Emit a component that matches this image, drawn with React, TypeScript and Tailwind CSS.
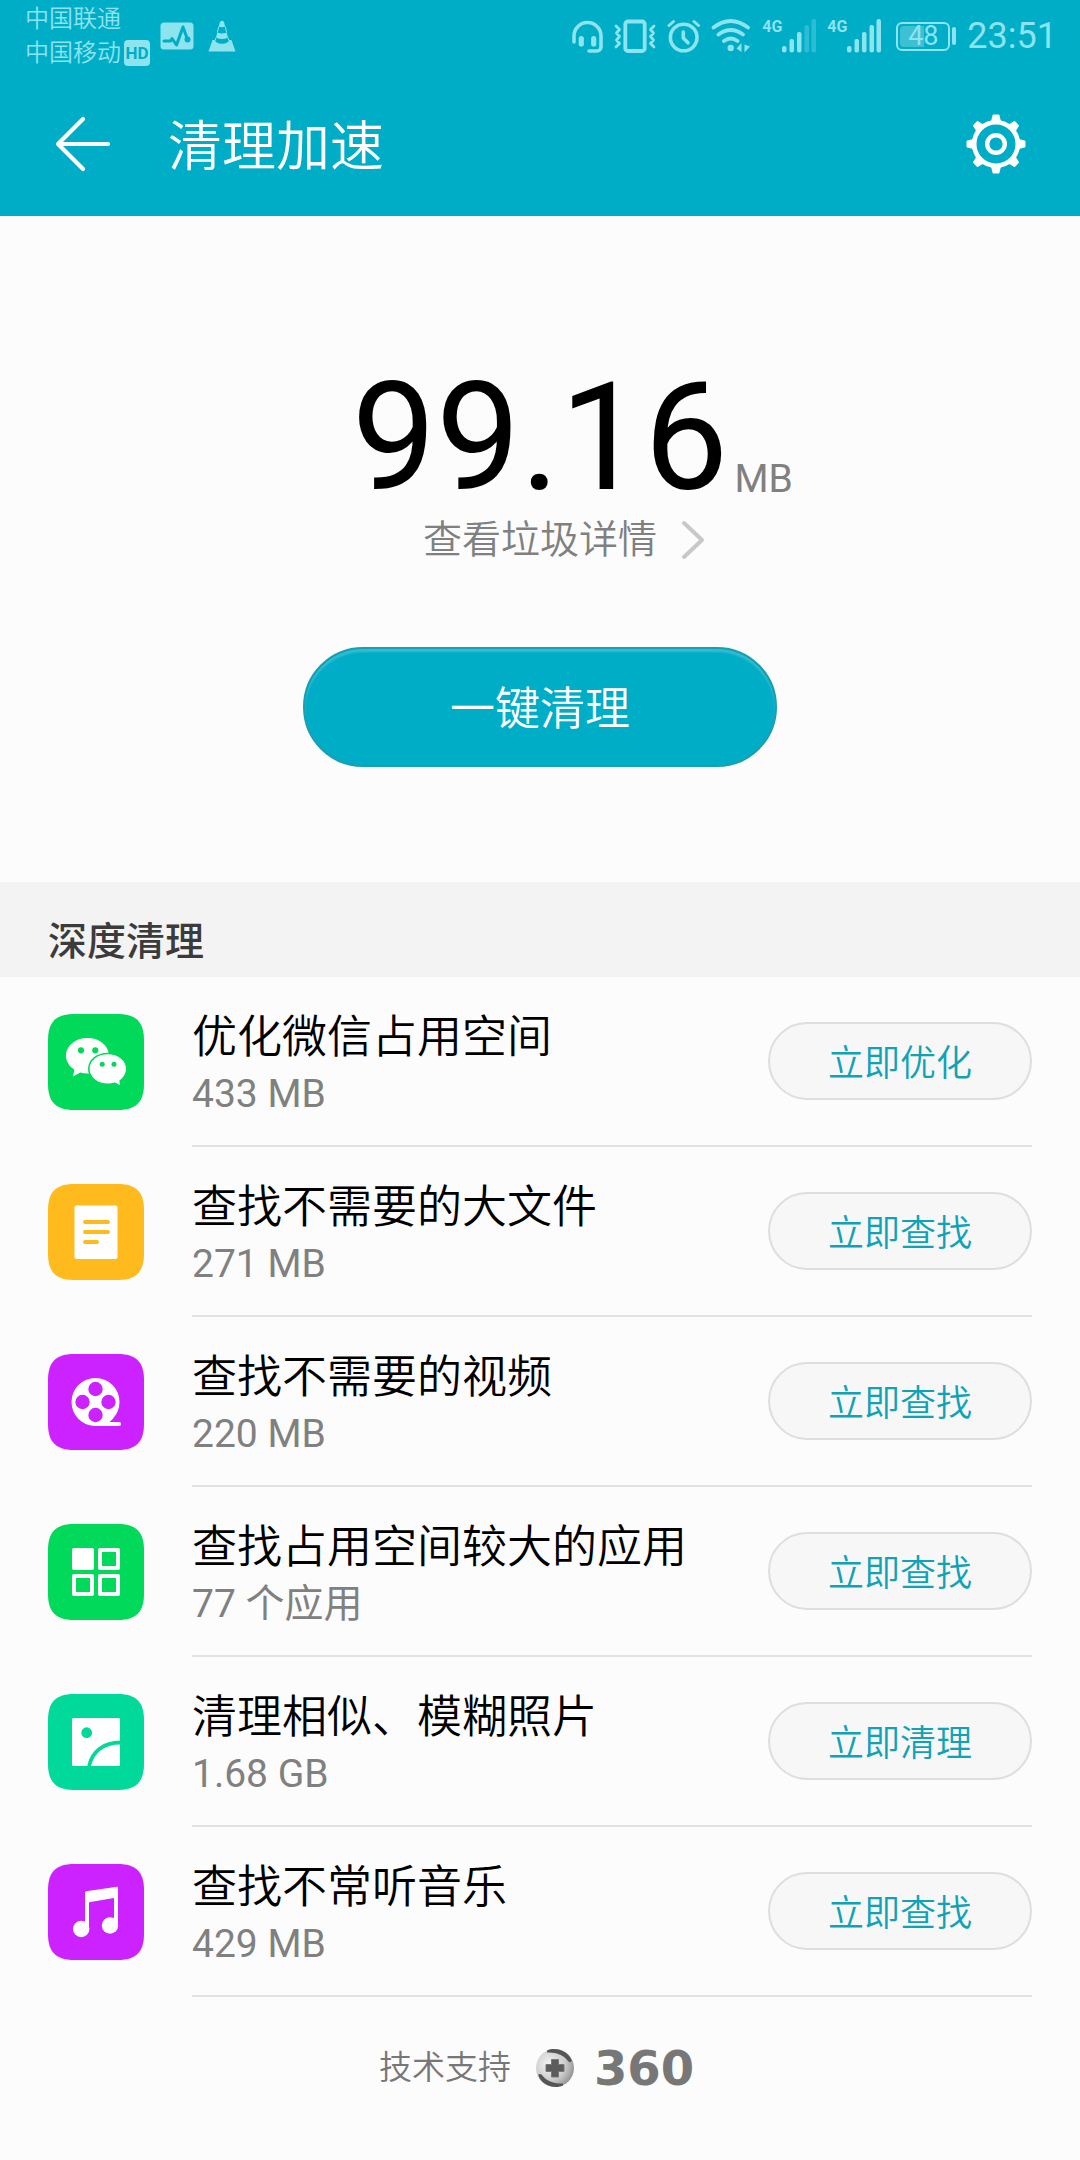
import type { ReactNode } from "react";

type CleanItem = {
  title: string;
  detail: string;
  action: string;
  color: string;
  icon: ReactNode;
};

const items: CleanItem[] = [
  {
    title: "优化微信占用空间",
    detail: "433 MB",
    action: "立即优化",
    color: "text-[#00d95a]",
    icon: (
      <>
        <path
          fill="white"
          d="M39.500 24c12 0 21.500 7.800 21.500 17.800S51.500 59.600 39.500 59.600c-2.600 0-5-.3-7.200-1L25 62.500l1.400-6.800C21.500 52.500 18 47.600 18 41.800 18 31.800 27.500 24 39.500 24z"
        />
        <path
          fill="white"
          stroke="currentColor"
          strokeWidth="1.600"
          d="M59.800 39.500c10.500 0 19 6.600 19 15.300 0 5-2.700 9.200-6.600 12l.8 5.700-6-3.200c-2.200.7-4.600 1.100-7.200 1.100-10.500 0-19-6.900-19-15.600s8.500-15.300 19-15.300z"
        />
        <circle cx="33" cy="36.300" r="3.100" />
        <circle cx="47.300" cy="36.300" r="3.100" />
        <circle cx="54.200" cy="50.300" r="2.500" />
        <circle cx="66" cy="50.300" r="2.500" />
      </>
    ),
  },
  {
    title: "查找不需要的大文件",
    detail: "271 MB",
    action: "立即查找",
    color: "text-[#ffbb1e]",
    icon: (
      <>
        <rect x="26.500" y="21.500" width="43" height="53.500" rx="2" fill="white" />
        <path
          d="M37 38h23M37 48h23M37 58h12"
          stroke="currentColor"
          strokeWidth="4"
          strokeLinecap="round"
        />
      </>
    ),
  },
  {
    title: "查找不需要的视频",
    detail: "220 MB",
    action: "立即查找",
    color: "text-[#cc22ff]",
    icon: (
      <>
        <circle cx="47.500" cy="48" r="24" fill="white" />
        <path
          fill="white"
          d="M47.500 72h23.500a2 2 0 0 0 0-4h-9.500l4-4-10-4z"
        />
        <circle cx="47.500" cy="35" r="7.200" />
        <circle cx="47.500" cy="61" r="7.200" />
        <circle cx="34.500" cy="48" r="7.200" />
        <circle cx="60.500" cy="48" r="7.200" />
      </>
    ),
  },
  {
    title: "查找占用空间较大的应用",
    detail: "77 个应用",
    action: "立即查找",
    color: "text-[#00d95a]",
    icon: (
      <g stroke="white" strokeWidth="4" strokeLinejoin="round" fill="none">
        <rect x="26" y="26" width="18" height="18" fill="white" />
        <rect x="52" y="26" width="18" height="18" />
        <rect x="26" y="52" width="18" height="18" />
        <rect x="52" y="52" width="18" height="18" />
      </g>
    ),
  },
  {
    title: "清理相似、模糊照片",
    detail: "1.68 GB",
    action: "立即清理",
    color: "text-[#00d99a]",
    icon: (
      <>
        <rect x="24" y="24" width="48" height="48" rx="1.500" fill="white" />
        <circle cx="38.700" cy="38.700" r="5.400" />
        <path
          d="M41 72.500C44 57 56 48.500 72.500 48.500"
          stroke="currentColor"
          strokeWidth="3.800"
          fill="none"
        />
      </>
    ),
  },
  {
    title: "查找不常听音乐",
    detail: "429 MB",
    action: "立即查找",
    color: "text-[#cc22ff]",
    icon: (
      <g fill="white">
        <path d="M37 28.500q0-1 1-1.200l31-4.500q1-.2 1 .8V62h-4V34l-25 4.200V66h-4z" />
        <circle cx="33.200" cy="65" r="8.200" />
        <circle cx="62" cy="61.500" r="8.200" />
      </g>
    ),
  },
];

const gearAngles = [0, 45, 90, 135, 180, 225, 270, 315];

const Signal = ({ weak = false }: { weak?: boolean }) => (
  <div className="flex items-start">
    <span className="w-5 text-[16px] leading-4 font-bold">4G</span>
    <svg className="h-[34px] w-[34px]" viewBox="0 0 34 34" fill="currentColor">
      <rect x="0" y="27" width="4.500" height="6.500" rx="2" />
      <rect x="7.500" y="20" width="4.500" height="13.500" rx="2" />
      <rect x="15" y="13" width="4.500" height="20.500" rx="2" />
      <rect x="22.500" y="6" width="4.500" height="27.500" rx="2" opacity={weak ? 0.3 : 1} />
      <rect x="29.500" y="0" width="4.500" height="33.500" rx="2" opacity={weak ? 0.3 : 1} />
    </svg>
  </div>
);

const StatusBar = () => (
  <div className="flex h-[72px] items-center justify-between pr-[23px] pl-[25px] text-[#8de3ee]">
    {/* Carriers and notifications */}
    <div className="flex items-center">
      <div className="text-[24px] leading-[34px] font-[350]">
        <p>中国联通</p>
        <div className="flex items-center gap-[3px]">
          <p>中国移动</p>
          <span className="flex size-[26px] items-center justify-center rounded bg-[#8de3ee] text-[17px] font-bold text-[#00adc7]">
            HD
          </span>
        </div>
      </div>
      <svg className="ml-2.5 h-[28px] w-[34px]" viewBox="0 0 34 28" fill="none">
        <rect x="0.500" y="0.500" width="33" height="27" rx="3.500" fill="currentColor" />
        <path
          d="M4 19h6.500l1.500-2.500 4.500 6.500 6.500-18 4.500 12.500"
          stroke="#00adc7"
          strokeWidth="3"
          strokeLinecap="round"
          strokeLinejoin="round"
        />
        <circle cx="27.500" cy="17.500" r="3" fill="#00adc7" />
      </svg>
      <svg className="ml-3.5 h-[32px] w-[28px]" viewBox="0 0 28 32" fill="currentColor">
        <path d="M12 2q2-2.500 4 0l1.200 4.500q-3.200 1.500-6.400 0z" />
        <path d="M9.300 12.500q4.700 2 9.400 0l1.300 5q-6 3-12 0z" />
        <path d="M4.500 20h2.800c0 5 13.400 5 13.400 0h2.800l4 11.500H.5z" />
        <path d="M10.800 6.500 9.300 12.500M17.200 6.500l1.500 6M8 17.500 7.300 20M20 17.500l.7 2.500" stroke="currentColor" strokeWidth="1" />
      </svg>
    </div>

    {/* System indicators */}
    <div className="flex items-center gap-[11px]">
      <svg className="h-[34px] w-[31px]" viewBox="23 19 31 34" fill="none" stroke="currentColor" strokeLinecap="round">
        <path d="M25 42v-6a13.500 13.500 0 0 1 27 0v11a4 4 0 0 1-4 4h-8" strokeWidth="3.600" />
        <path d="M32.300 38.500v5.500M44.700 38.500v5.500" strokeWidth="5.200" />
      </svg>
      <svg className="h-[34px] w-[42px]" viewBox="65 19 42 34" fill="none" stroke="currentColor" strokeLinecap="round" strokeLinejoin="round">
        <rect x="76.300" y="21.500" width="19.400" height="29.500" rx="2.500" strokeWidth="3.800" />
        <path d="M67 26l3.500 3.500-3 3.500 3 3.500-3 3.500 3 3.500-3.500 3.500M105 26l-3.500 3.500 3 3.500-3 3.500 3 3.500-3 3.500 3.500 3.500" strokeWidth="2.800" />
      </svg>
      <svg className="h-[34px] w-[33px]" viewBox="118 19 33 34" fill="none" stroke="currentColor" strokeLinecap="round">
        <circle cx="134.700" cy="37.500" r="13.300" strokeWidth="3.600" />
        <path d="M134.300 32v6l4.700 4.800" strokeWidth="3.600" strokeLinejoin="round" />
        <path d="M120 25.500l4.500-4M145 21.500l4.500 4" strokeWidth="3" />
      </svg>
      <svg className="h-[34px] w-[40px]" viewBox="160 19 40 34" fill="none" stroke="currentColor" strokeLinecap="round">
        <path d="M162.500 27.500q17.200-13 34.500 0M167.500 34.500q12.200-9 24.500 0M173 41q6.700-5 13.500 0" strokeWidth="3.800" />
        <circle cx="179.700" cy="48" r="3.200" fill="currentColor" stroke="none" />
        <path d="M185.500 48.500l5-5.500v9zM193.500 44.500v8l5.500-6z" fill="currentColor" stroke="none" />
      </svg>
      <Signal weak />
      <Signal />
      <div className="ml-1 flex items-center gap-0.5">
        <div className="relative flex h-[29px] w-[54px] items-center justify-center rounded-md border-2 border-current">
          <div className="absolute inset-y-0.5 left-0.5 w-6 rounded-l-sm bg-[#3cc0d2]" />
          <span className="relative text-[27px] leading-none">48</span>
        </div>
        <div className="h-[18px] w-1 rounded-full bg-current" />
      </div>
      <span className="text-[36px] leading-none">23:51</span>
    </div>
  </div>
);

const Header = () => (
  <header className="bg-[#00adc7] text-white">
    <StatusBar />
    <div className="flex h-36 items-center px-[54px]">
      <button type="button" aria-label="返回">
        <svg className="size-[58px]" viewBox="0 0 58 58" fill="none" stroke="currentColor" strokeWidth="4.200" strokeLinecap="round" strokeLinejoin="round">
          <path d="M54 29H4M29 4 4 29l25 25" />
        </svg>
      </button>
      <h1 className="ml-14 flex-1 pt-2 text-[54px] leading-[72px] font-[350]">清理加速</h1>
      <button type="button" aria-label="设置">
        <svg className="size-[60px]" viewBox="0 0 60 60" fill="none" stroke="currentColor">
          <circle cx="30" cy="30" r="21.800" strokeWidth="4.600" />
          <circle cx="30" cy="30" r="8.800" strokeWidth="4.400" />
          {gearAngles.map((angle) => (
            <path
              key={angle}
              d="M27.500 1.500h5l1.200 5 2 2.500H24.300l2-2.500z"
              fill="currentColor"
              strokeWidth="2"
              strokeLinejoin="round"
              transform={`rotate(${angle} 30 30)`}
            />
          ))}
        </svg>
      </button>
    </div>
  </header>
);

const Summary = () => (
  <section className="flex flex-col items-center pt-[147px] pb-[115px]">
    <div className="flex w-full items-end">
      <div className="flex-1" />
      <span className="text-[150px] leading-[150px] text-black">99.16</span>
      <div className="flex-1">
        <span className="block pl-1.5 text-[39px] leading-[68px] text-[#808080]">MB</span>
      </div>
    </div>

    <a href="#details" className="flex w-full items-center text-[#808080]">
      <span className="flex-1" />
      <span className="text-[39px] leading-[54px] font-[350]">查看垃圾详情</span>
      <span className="flex-1">
        <svg className="ml-6 h-10 w-6" viewBox="0 0 24 40" fill="none" stroke="#c8c8c8" strokeWidth="4" strokeLinecap="round" strokeLinejoin="round">
          <path d="M3 3l18 17L3 37" />
        </svg>
      </span>
    </a>

    <button
      type="button"
      className="mt-20 h-[120px] w-[474px] rounded-full border-2 border-[#1a9fb1] bg-[#00adc7] pt-1.5 text-[45px] font-[350] text-white shadow-[inset_0_3px_2px_rgba(255,255,255,0.2)]"
    >
      一键清理
    </button>
  </section>
);

const CleanRow = ({ title, detail, action, color, icon }: CleanItem) => (
  <li className="flex items-center gap-12 px-12">
    <svg className={`size-24 shrink-0 ${color}`} viewBox="0 0 96 96" fill="currentColor">
      <path d="M26 0h44c18 0 26 8 26 26v44c0 18-8 26-26 26H26C8 96 0 88 0 70V26C0 8 8 0 26 0z" />
      {icon}
    </svg>
    <div className="flex h-[170px] flex-1 items-center justify-between border-b-2 border-[#e2e2e2]">
      <div className="pt-2">
        <h3 className="text-[45px] leading-[58px] font-[350] text-black">{title}</h3>
        <p className="text-[39px] leading-[54px] text-[#808080]">{detail}</p>
      </div>
      <button
        type="button"
        className="h-[78px] w-[264px] shrink-0 rounded-full border-2 border-[#dedede] bg-[#f7f7f7] pt-1.5 text-[36px] font-[350] text-[#10a2b5]"
      >
        {action}
      </button>
    </div>
  </li>
);

const Footer = () => (
  <footer className="flex items-center justify-center pt-[47px] pb-16 text-[#777777]">
    <span className="text-[33px] leading-[48px] font-[350]">技术支持</span>
    <svg className="ml-6 size-10" viewBox="0 0 40 40">
      <defs>
        <radialGradient id="ball" cx="0.35" cy="0.4" r="0.7">
          <stop offset="0" stopColor="#f4f4f4" />
          <stop offset="0.6" stopColor="#cccccc" />
          <stop offset="1" stopColor="#8f8f8f" />
        </radialGradient>
      </defs>
      <circle cx="20" cy="20" r="19" fill="url(#ball)" />
      <path d="M12 2.500C21-1.500 33 3 36.500 12c.5 2.500-1.500 2.500-3 1.500C29 7 21 4 12 4.500z" fill="#555555" />
      <path d="M28 37.500C19 41.500 7 37 3.500 28c-.5-2.500 1.500-2.500 3-1.500C11 33 19 36 28 35.500z" fill="#555555" />
      <path d="M16.500 11.500h7v5h5.500v7h-5.500v5.500h-7v-5.500H11v-7h5.500z" fill="#5c5c5c" stroke="#777777" strokeLinejoin="round" />
    </svg>
    <span className="ml-3 w-[114px] text-center font-['DejaVu_Sans',sans-serif] text-[48px] leading-[48px] font-bold">
      360
    </span>
  </footer>
);

export default function App() {
  return (
    <div className="min-h-screen bg-[#fcfcfc] font-[Roboto,'Noto_Sans_CJK_SC',sans-serif]">
      <Header />
      <main>
        <Summary />
        <section id="details">
          <h2 className="bg-[#f3f3f3] px-12 pt-[33px] pb-2 text-[39px] leading-[54px] font-medium text-[#3b3b3b]">
            深度清理
          </h2>
          <ul>
            {items.map((item) => (
              <CleanRow key={item.title} {...item} />
            ))}
          </ul>
        </section>
      </main>
      <Footer />
    </div>
  );
}
